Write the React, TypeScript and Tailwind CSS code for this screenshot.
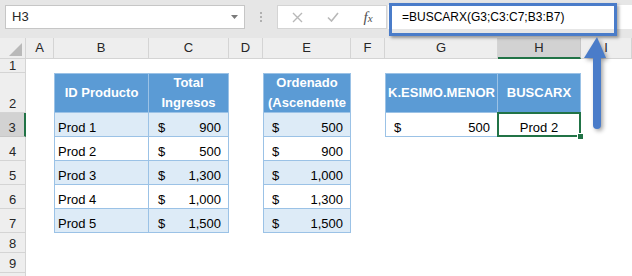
import { ReactNode } from 'react';

const products = [
  { id: 'Prod 1', total: '900', sorted: '500' },
  { id: 'Prod 2', total: '500', sorted: '900' },
  { id: 'Prod 3', total: '1,300', sorted: '1,000' },
  { id: 'Prod 4', total: '1,000', sorted: '1,300' },
  { id: 'Prod 5', total: '1,500', sorted: '1,500' },
];

const letters = ['A', 'B', 'C', 'D', 'E', 'F', 'G', 'H', 'I'];

const ColHeader = ({ label, selected }: { label: string; selected?: boolean }) =>
  selected ? (
    <div className="flex items-center justify-center bg-[#d2d2d2] border-r border-r-[#c6c6c6] border-b-2 border-b-[#217346] text-[13px] text-[#262626]">
      {label}
    </div>
  ) : (
    <div className="flex items-center justify-center bg-[#eeeeee] border-r border-b border-[#d4d4d4] text-[13px] text-[#262626]">
      {label}
    </div>
  );

const RowHeader = ({ label, selected, compact }: { label: string; selected?: boolean; compact?: boolean }) => (
  <div
    className={
      (compact ? 'items-center leading-[14px] ' : 'items-end leading-[16px] ') +
      (selected
        ? 'flex justify-center overflow-hidden bg-[#d2d2d2] border-b border-b-[#c6c6c6] border-r-2 border-r-[#217346] text-[13px] text-[#262626]'
        : 'flex justify-center overflow-hidden bg-[#eeeeee] border-r border-b border-[#d4d4d4] text-[13px] text-[#262626]')
    }
  >
    {label}
  </div>
);

// blue table header cell, lines are 20px like Excel's wrapped text
const Head = ({ children, first }: { children: ReactNode; first?: boolean }) => (
  <div
    className={
      'flex flex-col justify-center overflow-hidden bg-[#5b9bd5] text-center text-white font-bold text-[13px] leading-[20px] border-t border-r border-b border-[#9bc2e6] ' +
      (first ? 'border-l' : '')
    }
  >
    {children}
  </div>
);

// table body cell
const Body = ({ children, first, band }: { children?: ReactNode; first?: boolean; band?: boolean }) => (
  <div
    className={
      'relative flex items-end text-[13px] leading-[16px] text-black border-r border-b border-[#9bc2e6] ' +
      (band ? 'bg-[#ddebf7] ' : 'bg-white ') +
      (first ? 'border-l' : '')
    }
  >
    {children}
  </div>
);

const Money = ({ value, left = 'pl-[9px]' }: { value: string; left?: string }) => (
  <div className={'flex w-full justify-between pr-[7px] ' + left}>
    <span>$</span>
    <span>{value}</span>
  </div>
);

const Toolbar = () => (
  <div className="flex h-[38px] items-start bg-[#e6e6e6] pt-[5px]">
    {/* name box */}
    <div className="ml-[5px] flex h-[24px] w-[240px] items-center justify-between border border-[#c6c6c6] bg-white pl-[6px] pr-[6px] text-[13px] text-[#262626]">
      <span>H3</span>
      <svg width="7" height="4" viewBox="0 0 7 4">
        <polygon points="0,0 7,0 3.5,4" fill="#7a7a7a" />
      </svg>
    </div>
    {/* separator dots */}
    <div className="flex h-[24px] w-[32px] flex-col items-center justify-center gap-[2px]">
      <span className="h-[2px] w-[2px] bg-[#b0b0b0]" />
      <span className="h-[2px] w-[2px] bg-[#b0b0b0]" />
      <span className="h-[2px] w-[2px] bg-[#b0b0b0]" />
    </div>
    {/* cancel / enter / fx */}
    <div className="flex h-[24px] w-[110px] items-center border border-[#d4d4d4] bg-white pl-[1px]">
      <div className="flex w-[36px] justify-center">
        <svg width="11" height="11" viewBox="0 0 11 11">
          <path d="M1 1 L10 10 M10 1 L1 10" stroke="#b8b8b8" strokeWidth="1.4" />
        </svg>
      </div>
      <div className="flex w-[36px] justify-center">
        <svg width="12" height="10" viewBox="0 0 12 10">
          <path d="M1 5.5 L4.5 9 L11 1" stroke="#b8b8b8" strokeWidth="1.6" fill="none" />
        </svg>
      </div>
      <div className="flex w-[34px] justify-center font-['Liberation_Serif',serif] italic text-[#505050]">
        <span className="text-[15px] leading-none">f</span>
        <span className="text-[11px] leading-none mt-[3px]">x</span>
      </div>
    </div>
    {/* formula bar */}
    <div className="ml-[1px] flex h-[24px] flex-1 items-center bg-white pl-[14px] text-[12px] text-black">
      =BUSCARX(G3;C3:C7;B3:B7)
    </div>
  </div>
);

export default function App() {
  return (
    <div className="relative h-[276px] w-[632px] overflow-hidden bg-white font-['Liberation_Sans',Arial,sans-serif]">
      <Toolbar />

      <div className="grid grid-cols-[26px_28px_95px_80px_34px_88px_34px_113px_83px_1fr] grid-rows-[21px_14px_40px_24px_24px_24px_24px_24px_20px_20px_20px]">
        {/* column headers */}
        <div className="relative bg-[#eeeeee] border-r border-b border-[#d4d4d4]">
          <svg className="absolute left-[9px] top-[5px]" width="14" height="14" viewBox="0 0 14 14">
            <polygon points="13,0 13,13 0,13" fill="#b9b9b9" />
          </svg>
        </div>
        {letters.map((l) => (
          <ColHeader key={l} label={l} selected={l === 'H'} />
        ))}

        {/* row 1 */}
        <RowHeader label="1" compact />
        <div className="col-span-9" />

        {/* row 2: table headers */}
        <RowHeader label="2" />
        <div />
        <Head first>
          <div>ID Producto</div>
        </Head>
        <Head>
          <div>Total</div>
          <div>Ingresos</div>
        </Head>
        <div />
        <Head first>
          <div>Ordenado</div>
          <div className="whitespace-nowrap">(Ascendente</div>
        </Head>
        <div />
        <Head first>
          <div>K.ESIMO.MENOR</div>
        </Head>
        <Head>
          <div>BUSCARX</div>
        </Head>
        <div />

        {/* rows 3-7 */}
        {products.map((p, i) => {
          const band = i % 2 === 0;
          const row = i + 3;
          return [
            <RowHeader key={`h${row}`} label={String(row)} selected={row === 3} />,
            <div key={`a${row}`} />,
            <Body key={`b${row}`} first band={band}>
              <span className="pl-[3px]">{p.id}</span>
            </Body>,
            <Body key={`c${row}`} band={band}>
              <Money value={p.total} />
            </Body>,
            <div key={`d${row}`} />,
            <Body key={`e${row}`} first band={band}>
              <Money value={p.sorted} left="pl-[8px]" />
            </Body>,
            <div key={`f${row}`} />,
            row === 3 ? (
              <Body key={`g${row}`} first>
                <Money value="500" left="pl-[8px]" />
              </Body>
            ) : (
              <div key={`g${row}`} />
            ),
            row === 3 ? (
              <Body key={`hh${row}`}>
                <span className="w-full text-center">Prod 2</span>
                {/* active cell */}
                <div className="absolute -left-[1px] -top-[1px] -right-[1px] -bottom-[1px] border-2 border-[#217346]" />
                <div className="absolute -right-[4px] -bottom-[4px] h-[7px] w-[7px] border border-white bg-[#217346]" />
              </Body>
            ) : (
              <div key={`hh${row}`} />
            ),
            <div key={`i${row}`} />,
          ];
        })}

        {/* rows 8-10 */}
        {[8, 9, 10].map((r) => [
          <RowHeader key={`h${r}`} label={String(r)} />,
          <div key={`x${r}`} className="col-span-9" />,
        ])}
      </div>

      {/* callout: formula outline */}
      <div className="absolute left-[389px] top-[3px] h-[33px] w-[228px] border-[3px] border-[#4a7cc9] shadow-[2px_2px_3px_rgba(0,0,0,0.35)]" />

      {/* callout: arrow */}
      <svg
        className="absolute left-[583px] top-[35px] drop-shadow-[2px_2px_2px_rgba(0,0,0,0.35)]"
        width="26"
        height="96"
        viewBox="0 0 26 96"
      >
        <polygon points="14,2 1,23 23,23" fill="#4a7cc9" />
        <rect x="10" y="20" width="8" height="74" rx="4" fill="#4a7cc9" />
      </svg>
    </div>
  );
}
